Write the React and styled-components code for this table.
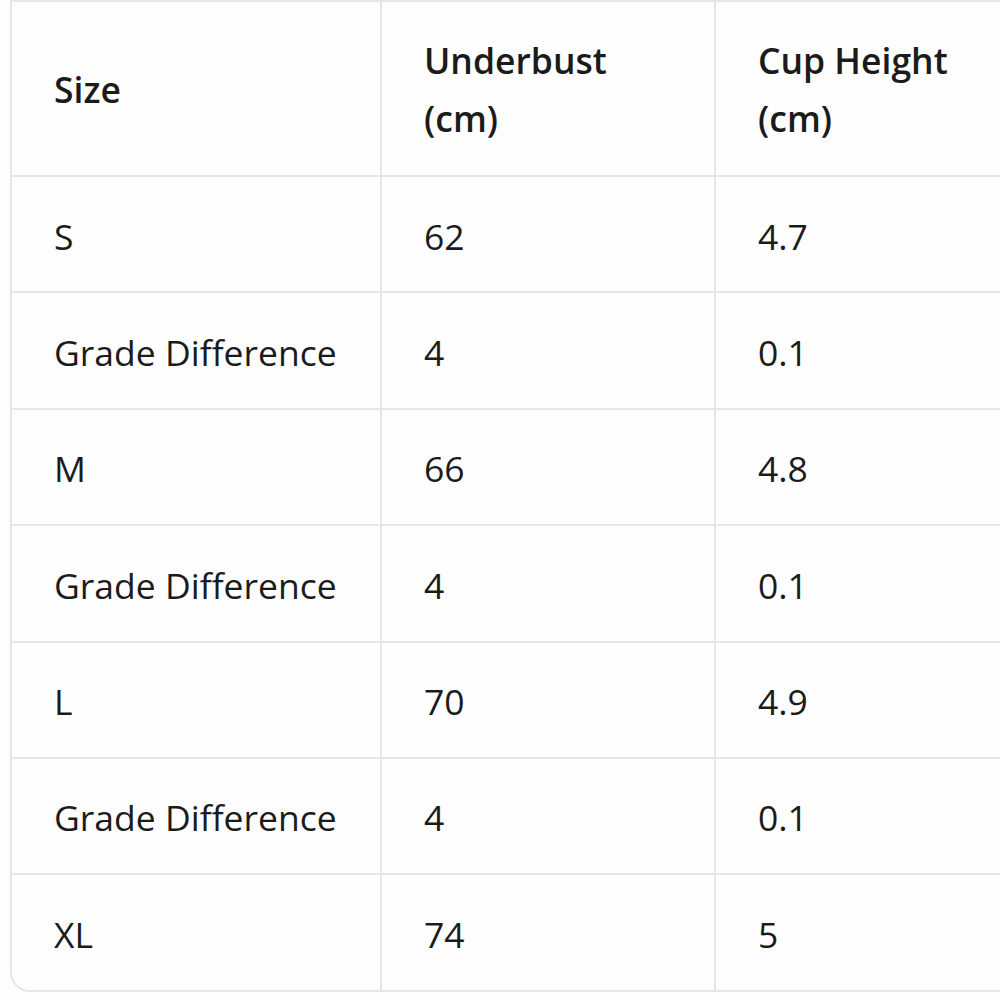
import React from 'react';
import styled, {createGlobalStyle} from 'styled-components';

const GlobalStyle = createGlobalStyle`
	html, body {
		margin: 0;
		padding: 0;
		background: #fdfdfd;
	}
`

const Frame = styled.div`
	width: 1000px;
	height: 1000px;
	overflow: hidden;
	background: #fdfdfd;
	font-family: "Open Sans", "Noto Sans", sans-serif;
	color: #1b1b1b;
`

const TableBox = styled.div`
	margin: -40px 0 0 10px;
	width: 1100px;
	padding-top: 38px;
	border: 2px solid #e6e6e6;
	border-radius: 20px;
	background: #fefefe;
	overflow: hidden;
`

const Grid = styled.div`
	display: grid;
	grid-template-columns: 370px 334px 1fr;
	border-top: 2px solid #e6e6e6;
`

const Cell = styled.div`
	padding: ${p => p.$head ? '29px 42px 28px' : '29.5px 42px 26.9px'};
	font-size: 35.5px;
	line-height: 58px;
	font-weight: ${p => p.$head ? 600 : 400};
	border-right: ${p => p.$last ? 'none' : '2px solid #e6e6e6'};
	border-bottom: ${p => p.$bottom ? 'none' : '2px solid #e6e6e6'};
	white-space: nowrap;
`

const HeadCell = styled(Cell)`
	display: flex;
	flex-direction: column;
	justify-content: center;
`

const heads = [['Size'], ['Underbust', '(cm)'], ['Cup Height', '(cm)']];

const rows = [
	['S', '62', '4.7'],
	['Grade Difference', '4', '0.1'],
	['M', '66', '4.8'],
	['Grade Difference', '4', '0.1'],
	['L', '70', '4.9'],
	['Grade Difference', '4', '0.1'],
	['XL', '74', '5'],
];

export default function App() {
	return (
		<Frame>
			<GlobalStyle />
			<TableBox>
				<Grid>
					{heads.map((lines, i) => (
					<HeadCell key={i} $head $last={i === 2}>
						{lines.map((l, j) => <span key={j}>{l}</span>)}
					</HeadCell>
					))}
					{rows.map((row, r) => row.map((value, c) => (
					<Cell key={r + '-' + c} $last={c === 2} $bottom={r === rows.length - 1}>
						{value}
					</Cell>
					)))}
				</Grid>
			</TableBox>
		</Frame>
	);
}
